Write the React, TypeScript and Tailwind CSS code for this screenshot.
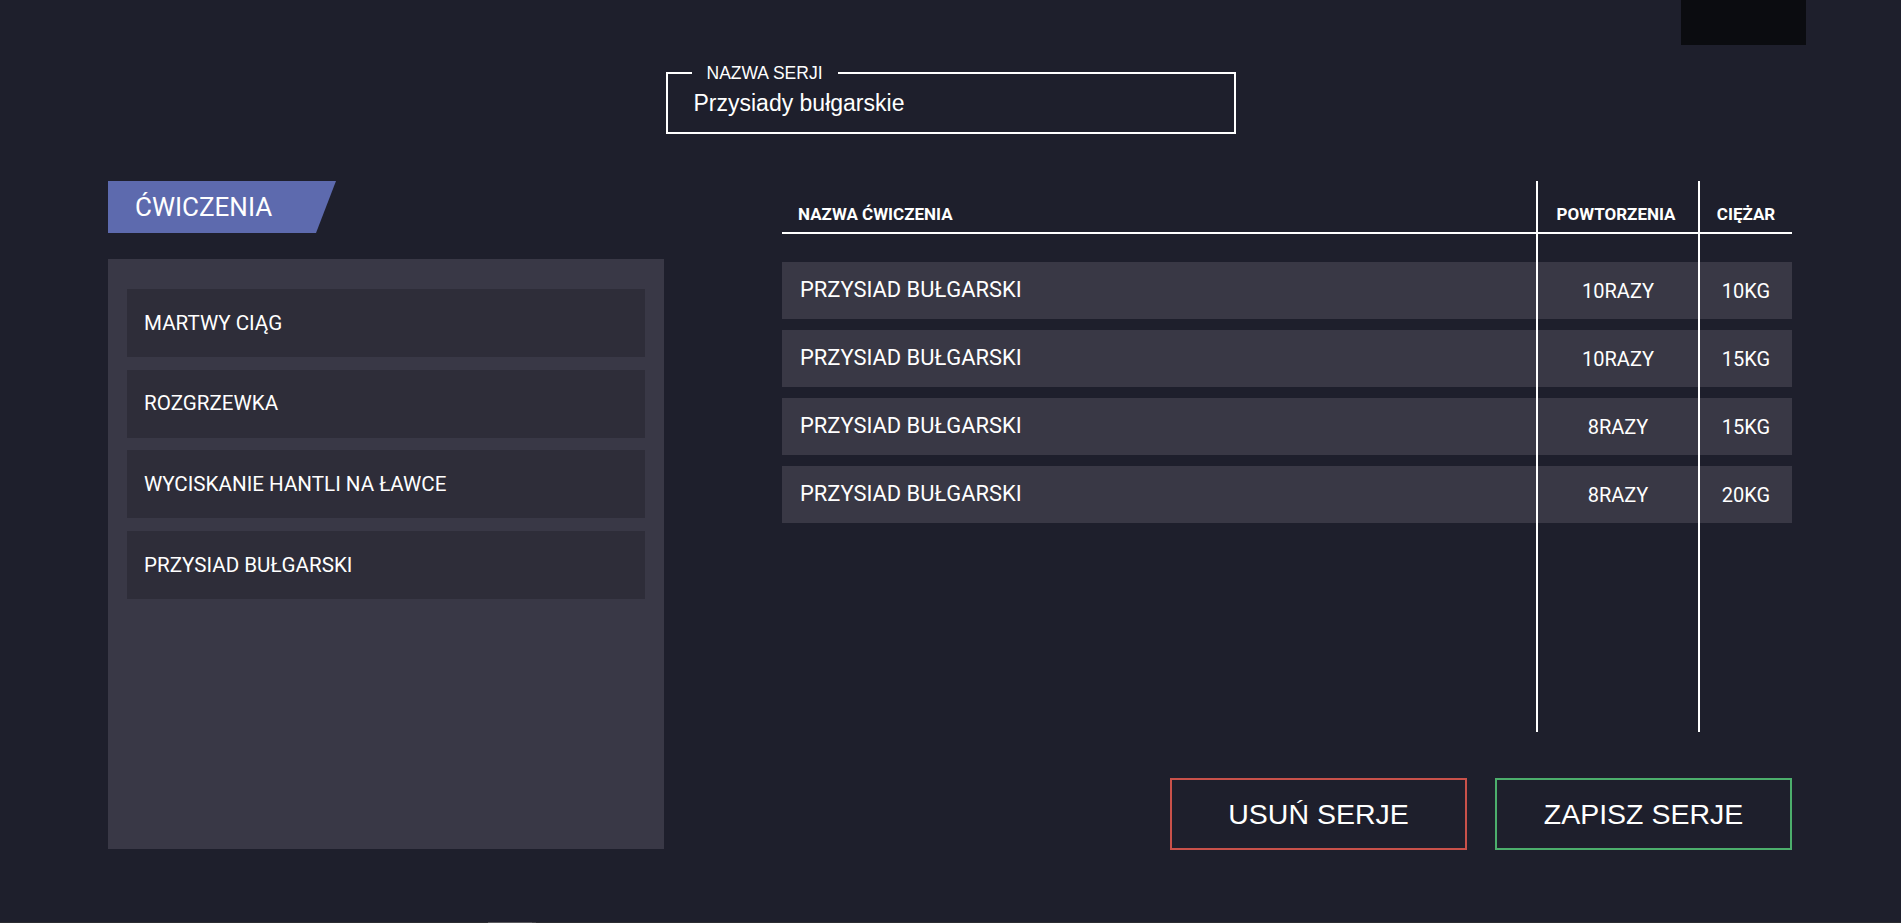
import React from 'react'

const exercises = ['MARTWY CIĄG', 'ROZGRZEWKA', 'WYCISKANIE HANTLI NA ŁAWCE', 'PRZYSIAD BUŁGARSKI']

const sets = [
  { name: 'PRZYSIAD BUŁGARSKI', reps: '10RAZY', weight: '10KG' },
  { name: 'PRZYSIAD BUŁGARSKI', reps: '10RAZY', weight: '15KG' },
  { name: 'PRZYSIAD BUŁGARSKI', reps: '8RAZY', weight: '15KG' },
  { name: 'PRZYSIAD BUŁGARSKI', reps: '8RAZY', weight: '20KG' },
]

const roboto = "font-['Roboto',_'Liberation_Sans',_sans-serif]"
const arial = "font-['Liberation_Sans',_Arial,_sans-serif]"

function ExerciseList() {
  return (
    <div className="w-[556px]">
      <div
        className={`flex h-[52px] w-[228px] items-center bg-[#5d6aae] pl-[27px] text-[26px] text-white [clip-path:polygon(0_0,100%_0,calc(100%-20px)_100%,0_100%)] ${roboto}`}
      >
        ĆWICZENIA
      </div>
      <div className="mt-[26px] flex h-[590px] flex-col gap-[12.67px] bg-[#393846] px-[19px] pt-[30px]">
        {exercises.map((ex) => (
          <div
            key={ex}
            className={`flex h-[68px] items-center bg-[#2e2d39] pl-[17px] text-[20.6px] text-white ${roboto}`}
          >
            {ex}
          </div>
        ))}
      </div>
    </div>
  )
}

function SetsTable() {
  return (
    <div className={`flex h-[551px] text-white ${roboto}`}>
      <div className="flex w-[754px] flex-col">
        <div className="flex h-[53px] items-end border-b-2 border-white pb-[9px] pl-[16px] text-[17px] leading-[17px] font-bold">
          NAZWA ĆWICZENIA
        </div>
        <div className="mt-[28px] flex flex-col gap-[11px]">
          {sets.map((s, i) => (
            <div key={i} className="flex h-[57px] items-center bg-[#393845] pl-[18px] text-[21.9px]">
              {s.name}
            </div>
          ))}
        </div>
      </div>
      <div className="flex w-[162px] flex-col border-l-2 border-white">
        <div className="flex h-[53px] items-end justify-center border-b-2 border-white pb-[9px] pr-[4px] text-[17px] leading-[17px] font-bold">
          POWTORZENIA
        </div>
        <div className="mt-[28px] flex flex-col gap-[11px]">
          {sets.map((s, i) => (
            <div key={i} className="flex h-[57px] items-center justify-center bg-[#393845] text-[20px]">
              {s.reps}
            </div>
          ))}
        </div>
      </div>
      <div className="flex w-[94px] flex-col border-l-2 border-white">
        <div className="flex h-[53px] items-end justify-center border-b-2 border-white pb-[9px] text-[17px] leading-[17px] font-bold">
          CIĘŻAR
        </div>
        <div className="mt-[28px] flex flex-col gap-[11px]">
          {sets.map((s, i) => (
            <div key={i} className="flex h-[57px] items-center justify-center bg-[#393845] text-[20px]">
              {s.weight}
            </div>
          ))}
        </div>
      </div>
    </div>
  )
}

export default function App() {
  return (
    <div className="flex h-[923px] w-full flex-col overflow-hidden bg-[#1e1f2c]">
      <div className="flex justify-end pr-[95px]">
        <div className="h-[45px] w-[125px] bg-[#0b0c10]" />
      </div>

      <div className="mt-[27px] flex justify-center">
        <div className="relative flex h-[62px] w-[570px] items-center border-2 border-white pl-[26px]">
          <span
            className={`absolute -top-[9px] left-[24px] bg-[#1e1f2c] px-[15px] text-[17.5px] leading-[17px] text-white ${arial}`}
          >
            NAZWA SERJI
          </span>
          <span className={`text-[23px] text-white ${arial}`}>Przysiady bułgarskie</span>
        </div>
      </div>

      <div className="mt-[47px] flex gap-[118px] pl-[108px]">
        <ExerciseList />
        <div className="w-[1010px]">
          <SetsTable />
          <div className="mt-[46px] flex justify-end gap-[28px]">
            <button
              type="button"
              className={`h-[72px] w-[297px] border-2 border-[#c9514a] text-[28.5px] text-white ${arial}`}
            >
              USUŃ SERJE
            </button>
            <button
              type="button"
              className={`h-[72px] w-[297px] border-2 border-[#4cae6c] text-[28.5px] text-white ${arial}`}
            >
              ZAPISZ SERJE
            </button>
          </div>
        </div>
      </div>

      <div className="mt-auto flex h-px bg-[#2c2c31]">
        <div className="ml-[488px] w-[44px] bg-[#5a5a5e]" />
        <div className="w-[4px] bg-[#444448]" />
      </div>
    </div>
  )
}
